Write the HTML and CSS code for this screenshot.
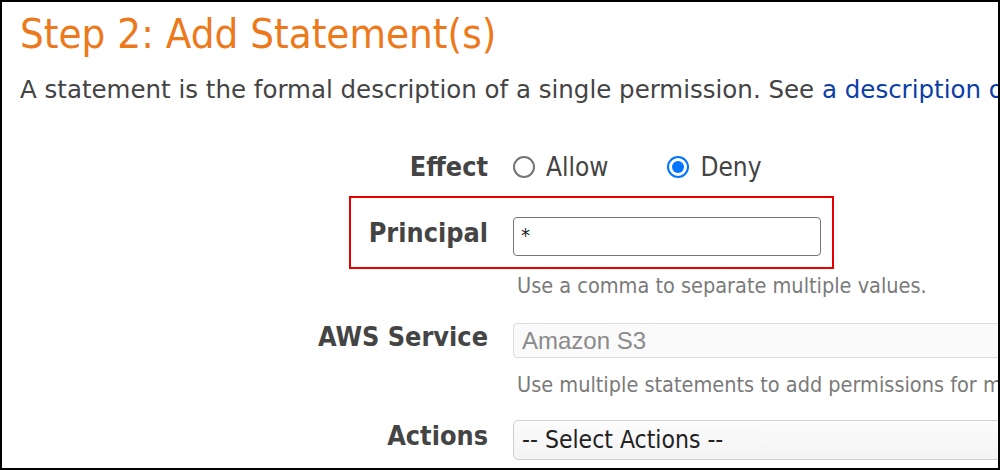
FILE: index.html
```html
<!DOCTYPE html>
<html>
<head>
<meta charset="utf-8">
<link rel="stylesheet" href="styles.css">
</head>
<body>
<div class="frame">
  <h1 class="title">Step 2: Add Statement(s)</h1>
  <p class="intro">A statement is the formal description of a single permission. See <a class="link" href="#">a description of elements</a> that you can use in statements.</p>
  <div class="form">
    <div class="label">Effect</div>
    <div class="radios">
      <label class="radio-opt"><span class="radio"></span>Allow</label>
      <label class="radio-opt"><span class="radio checked"></span>Deny</label>
    </div>

    <div class="label label-principal">Principal</div>
    <div class="input input-principal">*</div>

    <div class="hint hint-first">Use a comma to separate multiple values.</div>

    <div class="label label-service">AWS Service</div>
    <div class="input input-service">Amazon S3</div>

    <div class="hint hint-second">Use multiple statements to add permissions for more than one service.</div>

    <div class="label label-actions">Actions</div>
    <div class="select">-- Select Actions --</div>
  </div>
  <div class="highlight"></div>
</div>
</body>
</html>
```

FILE: styles.css
```css
html, body {
  margin: 0;
  padding: 0;
  background: #fff;
}

.frame {
  position: relative;
  box-sizing: border-box;
  width: 1000px;
  height: 470px;
  border: 2px solid #000;
  overflow: hidden;
  padding: 8px 0 0 18px;
  font-family: "DejaVu Sans Condensed", "DejaVu Sans", sans-serif;
  font-stretch: condensed;
  color: #444;
}

.title {
  margin: 0;
  font-weight: normal;
  font-size: 41.7px;
  line-height: 48px;
  color: #ec7a1c;
  white-space: nowrap;
}

.intro {
  margin: 18px 0 0 0;
  font-family: "DejaVu Sans", sans-serif;
  font-stretch: normal;
  font-size: 24.5px;
  line-height: 28px;
  white-space: nowrap;
}

.link {
  color: #0b3ea6;
  text-decoration: none;
}

.form {
  display: grid;
  grid-template-columns: 468px 1fr;
  column-gap: 25px;
  align-items: center;
  margin-top: 43px;
}

.label {
  grid-column: 1;
  text-align: right;
  font-weight: bold;
  font-size: 26.8px;
  line-height: 30px;
  white-space: nowrap;
}

.radios {
  grid-column: 2;
  display: flex;
  align-items: center;
  height: 40px;
  font-size: 26px;
  gap: 59px;
}

.radio-opt {
  display: flex;
  align-items: center;
  gap: 11px;
}

.radio {
  box-sizing: border-box;
  width: 22px;
  height: 22px;
  border-radius: 50%;
  border: 2px solid #767676;
  background: #fff;
  display: flex;
  align-items: center;
  justify-content: center;
}

.radio.checked {
  border-color: #0075ff;
}

.radio.checked::after {
  content: "";
  width: 12px;
  height: 12px;
  border-radius: 50%;
  background: #0075ff;
}

.input {
  grid-column: 2;
  box-sizing: border-box;
  border-radius: 4px;
  white-space: nowrap;
}

.input-principal {
  margin-top: 30px;
  width: 308px;
  height: 39px;
  border: 1px solid #767676;
  padding: 5px 0 0 7px;
  font-size: 20px;
  color: #222;
}

.label-principal {
  margin-top: 30px;
  padding-bottom: 8px;
}

.hint {
  grid-column: 2;
  padding-left: 4px;
  font-size: 21.5px;
  line-height: 26px;
  color: #7a7a7a;
  white-space: nowrap;
}

.hint-first {
  margin-top: 17px;
}

.input-service {
  margin-top: 23px;
  width: 620px;
  height: 35px;
  border: 1px solid #dcdcdc;
  background: #fafafa;
  padding-left: 8px;
  font-family: "Liberation Sans", Arial, sans-serif;
  font-stretch: normal;
  font-size: 24px;
  line-height: 33px;
  color: #8a8a8a;
}

.label-service {
  margin-top: 23px;
  padding-bottom: 6px;
}

.hint-second {
  margin-top: 14px;
}

.select {
  grid-column: 2;
  margin-top: 22px;
  box-sizing: border-box;
  width: 620px;
  height: 40px;
  border: 1px solid #cfcfcf;
  border-radius: 5px;
  background: linear-gradient(#fcfcfc, #f3f3f3);
  padding-left: 8px;
  font-size: 24.5px;
  line-height: 38px;
  color: #222;
  white-space: nowrap;
}

.label-actions {
  margin-top: 22px;
  padding-bottom: 8px;
}

.highlight {
  position: absolute;
  left: 347px;
  top: 194px;
  width: 481px;
  height: 69px;
  border: 2px solid #e60000;
}
```
